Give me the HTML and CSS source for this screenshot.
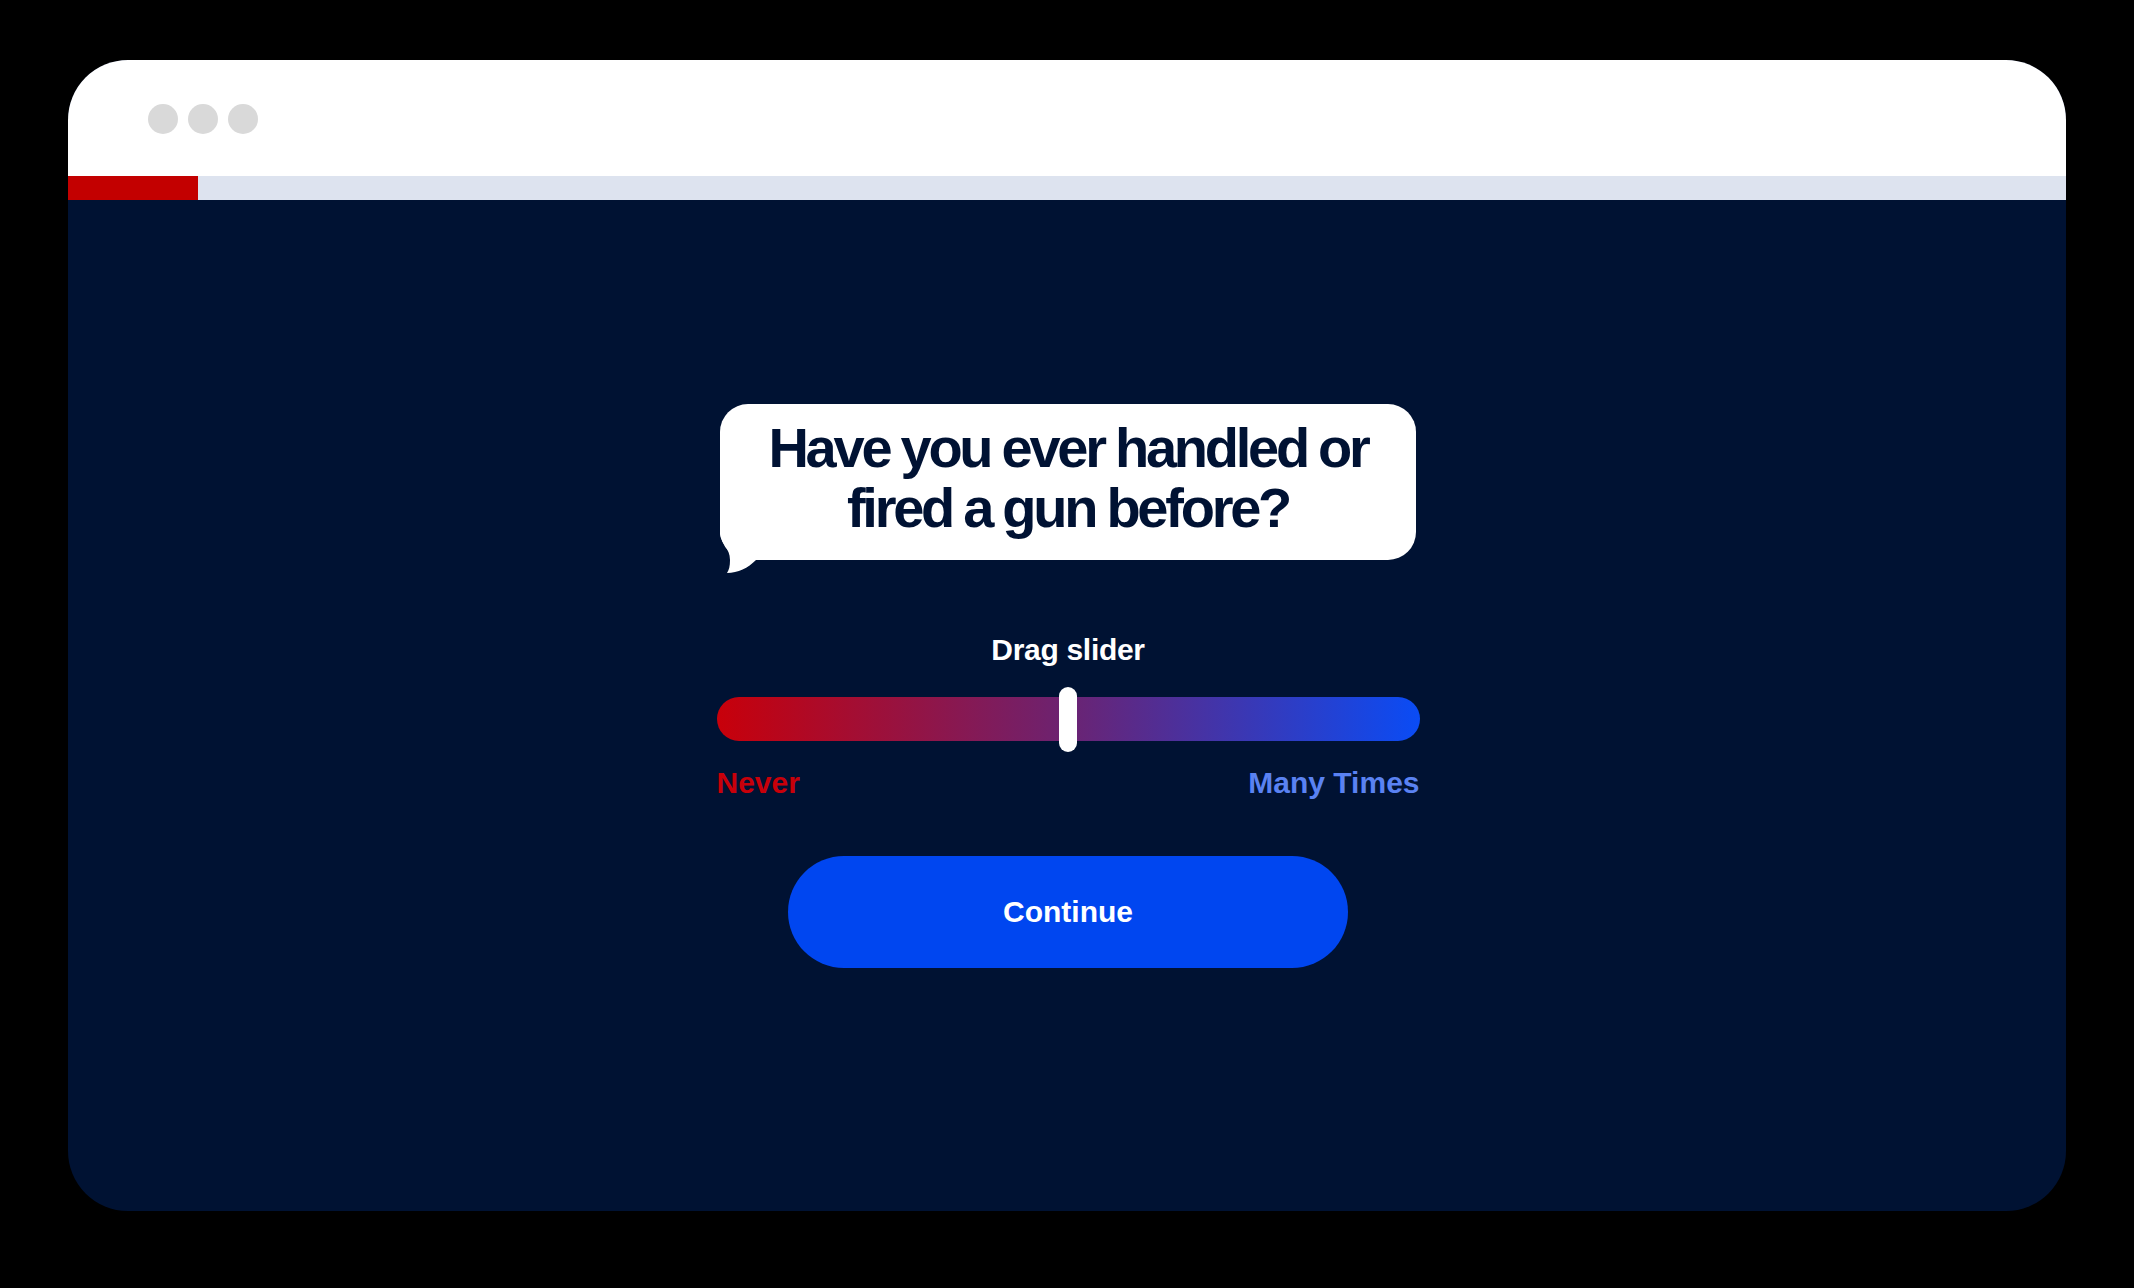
FILE: index.html
```html
<!DOCTYPE html>
<html lang="en">
<head>
<meta charset="utf-8">
<title>Quiz</title>
<link rel="stylesheet" href="styles.css">
</head>
<body>
<div class="window">
  <div class="titlebar">
    <span class="dot"></span><span class="dot"></span><span class="dot"></span>
  </div>
  <div class="progress"><div class="progress-fill"></div></div>
  <main class="content">
    <div class="bubble">
      <h1 class="question">Have you ever handled or<br>fired a gun before?</h1>
      <svg class="tail" width="40" height="46" viewBox="0 0 40 46" aria-hidden="true">
        <path d="M0,0 L0,6 C1,16 10,20 10,32 C10,38 9,42 7,45 C18,45 28,40 36,32 L40,32 L40,0 Z" fill="#ffffff"/>
      </svg>
    </div>
    <div class="drag-label">Drag slider</div>
    <div class="track">
      <div class="thumb"></div>
    </div>
    <div class="scale-labels">
      <span class="never">Never</span>
      <span class="many">Many Times</span>
    </div>
    <button class="continue">Continue</button>
  </main>
</div>
</body>
</html>
```

FILE: styles.css
```css
* { box-sizing: border-box; }

html, body {
  margin: 0;
  background: #000000;
}

body {
  padding: 60px 68px 77px;
  font-family: "Liberation Sans", Arial, sans-serif;
}

.window {
  width: 1998px;
  height: 1151px;
  border-radius: 60px;
  overflow: hidden;
  background: #001233;
  display: flex;
  flex-direction: column;
}

.titlebar {
  height: 116px;
  background: #ffffff;
  display: flex;
  align-items: center;
  gap: 10px;
  padding-left: 80px;
  padding-top: 2px;
}

.dot {
  width: 30px;
  height: 30px;
  border-radius: 50%;
  background: #d9d9d9;
}

.progress {
  height: 24px;
  background: #dde3ef;
}

.progress-fill {
  width: 130px;
  height: 100%;
  background: #c30000;
}

.content {
  flex: 1;
  display: flex;
  flex-direction: column;
  align-items: center;
  padding-top: 204px;
  padding-left: 2px;
}

.bubble {
  position: relative;
  width: 696px;
  height: 156px;
  background: #ffffff;
  border-radius: 28px 28px 28px 30px;
  padding-top: 14px;
  text-align: center;
}

.question {
  margin: 0;
  color: #001233;
  font-size: 56px;
  line-height: 60px;
  font-weight: 700;
  letter-spacing: -0.058em;
  word-spacing: -0.02em;
}

.tail {
  position: absolute;
  left: 0;
  bottom: -14px;
  display: block;
}

.drag-label {
  margin-top: 72px;
  color: #ffffff;
  font-size: 30px;
  line-height: 36px;
  font-weight: 700;
  letter-spacing: -0.01em;
}

.track {
  position: relative;
  margin-top: 29px;
  width: 703px;
  height: 44px;
  border-radius: 22px;
  background: linear-gradient(90deg, #c8000a 0%, #6b2372 50%, #0a4cf5 100%);
}

.thumb {
  position: absolute;
  left: 342px;
  top: -10px;
  width: 18px;
  height: 65px;
  border-radius: 9px;
  background: #ffffff;
}

.scale-labels {
  margin-top: 24px;
  width: 703px;
  display: flex;
  justify-content: space-between;
  font-size: 30px;
  line-height: 36px;
  font-weight: 700;
}

.never { color: #c8000a; }
.many { color: #5a82f2; }

.continue {
  margin-top: 55px;
  width: 560px;
  height: 112px;
  border: none;
  border-radius: 56px;
  background: #0046f0;
  color: #ffffff;
  font-family: "Liberation Sans", Arial, sans-serif;
  font-size: 30px;
  line-height: 36px;
  font-weight: 700;
  padding: 0;
}
```
